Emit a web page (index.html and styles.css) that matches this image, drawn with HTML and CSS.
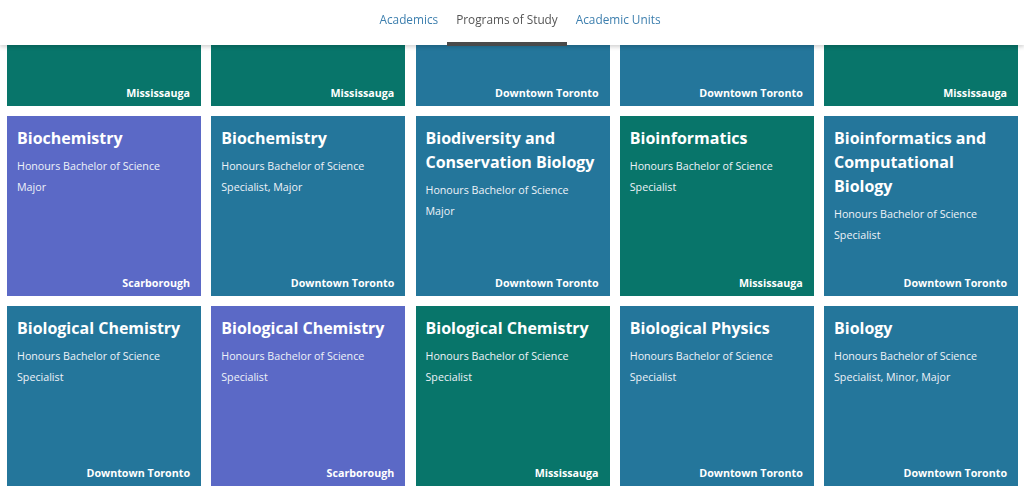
FILE: index.html
```html
<!DOCTYPE html>
<html lang="en">
<head>
<meta charset="utf-8">
<title>Programs of Study</title>
<link rel="stylesheet" href="styles.css">
</head>
<body>
<header class="topnav">
  <nav class="tabs">
    <a class="tab" href="#">Academics</a>
    <a class="tab active" href="#">Programs of Study</a>
    <a class="tab" href="#">Academic Units</a>
  </nav>
</header>
<main class="grid">
  <a class="card green" href="#"><div class="card-body"></div><div class="campus">Mississauga</div></a>
  <a class="card green" href="#"><div class="card-body"></div><div class="campus">Mississauga</div></a>
  <a class="card blue" href="#"><div class="card-body"></div><div class="campus">Downtown Toronto</div></a>
  <a class="card blue" href="#"><div class="card-body"></div><div class="campus">Downtown Toronto</div></a>
  <a class="card green" href="#"><div class="card-body"></div><div class="campus">Mississauga</div></a>

  <a class="card purple" href="#"><div class="card-body"><h2>Biochemistry</h2><p>Honours Bachelor of Science<br>Major</p></div><div class="campus">Scarborough</div></a>
  <a class="card blue" href="#"><div class="card-body"><h2>Biochemistry</h2><p>Honours Bachelor of Science<br>Specialist, Major</p></div><div class="campus">Downtown Toronto</div></a>
  <a class="card blue" href="#"><div class="card-body"><h2>Biodiversity and Conservation Biology</h2><p>Honours Bachelor of Science<br>Major</p></div><div class="campus">Downtown Toronto</div></a>
  <a class="card green" href="#"><div class="card-body"><h2>Bioinformatics</h2><p>Honours Bachelor of Science<br>Specialist</p></div><div class="campus">Mississauga</div></a>
  <a class="card blue" href="#"><div class="card-body"><h2>Bioinformatics and Computational Biology</h2><p>Honours Bachelor of Science<br>Specialist</p></div><div class="campus">Downtown Toronto</div></a>

  <a class="card blue" href="#"><div class="card-body"><h2>Biological Chemistry</h2><p>Honours Bachelor of Science<br>Specialist</p></div><div class="campus">Downtown Toronto</div></a>
  <a class="card purple" href="#"><div class="card-body"><h2>Biological Chemistry</h2><p>Honours Bachelor of Science<br>Specialist</p></div><div class="campus">Scarborough</div></a>
  <a class="card green" href="#"><div class="card-body"><h2>Biological Chemistry</h2><p>Honours Bachelor of Science<br>Specialist</p></div><div class="campus">Mississauga</div></a>
  <a class="card blue" href="#"><div class="card-body"><h2>Biological Physics</h2><p>Honours Bachelor of Science<br>Specialist</p></div><div class="campus">Downtown Toronto</div></a>
  <a class="card blue" href="#"><div class="card-body"><h2>Biology</h2><p>Honours Bachelor of Science<br>Specialist, Minor, Major</p></div><div class="campus">Downtown Toronto</div></a>
</main>
</body>
</html>
```
FILE: styles.css
```css
* { box-sizing: border-box; }
html, body { margin: 0; padding: 0; }
body {
  background: #ffffff;
  font-family: "Open Sans", "Liberation Sans", sans-serif;
  overflow: hidden;
  height: 492px;
}
.topnav {
  position: fixed;
  top: 0;
  left: 0;
  right: 0;
  height: 45px;
  background: #ffffff;
  box-shadow: 0 2px 4px rgba(0, 0, 0, 0.18);
  z-index: 10;
  display: flex;
  justify-content: center;
}
.tabs {
  display: flex;
  margin-left: 16px;
}
.tab {
  display: flex;
  align-items: center;
  height: 46px;
  padding: 0 9px 4px;
  font-size: 11.8px;
  color: #3d7fae;
  text-decoration: none;
  border-bottom: 4px solid transparent;
}
.tab.active {
  color: #555555;
  border-bottom-color: #4a4a4a;
}
.grid {
  display: grid;
  grid-template-columns: repeat(5, 194px);
  grid-auto-rows: 180px;
  column-gap: 10.25px;
  row-gap: 10px;
  padding: 0 7px;
  margin-top: -74px;
}
.card {
  display: flex;
  flex-direction: column;
  justify-content: space-between;
  padding: 10px 11px 5px 10px;
  color: #ffffff;
  text-decoration: none;
}
.green { background: #08756a; }
.blue { background: #24769b; }
.purple { background: #5b69c6; }
.card h2 {
  margin: 0;
  font-size: 16px;
  line-height: 24px;
  font-weight: 700;
}
.card p {
  margin: 6px 0 0;
  font-size: 10.7px;
  line-height: 20.5px;
  color: #eef2f8;
}
.campus {
  text-align: right;
  font-size: 10.7px;
  line-height: 16px;
  font-weight: 700;
}
```
